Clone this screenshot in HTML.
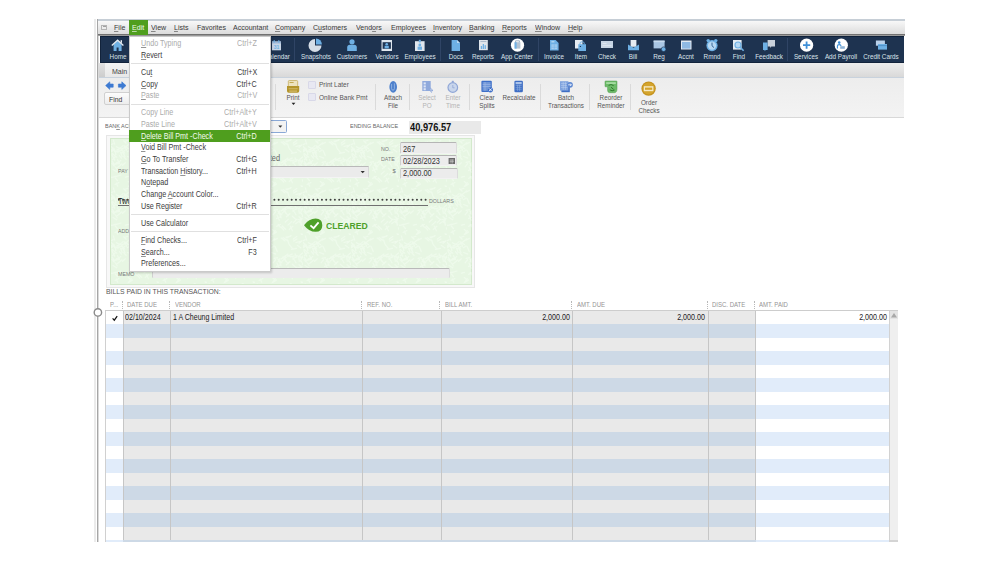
<!DOCTYPE html><html><head><meta charset="utf-8"><style>
html,body{margin:0;padding:0;background:#fff;width:999px;height:562px;overflow:hidden;}
body{position:relative;font-family:"Liberation Sans",sans-serif;}
.t{position:absolute;white-space:nowrap;line-height:1;}
.t u{text-decoration-thickness:0.6px;text-underline-offset:0.6px;text-decoration-color:rgba(60,60,60,0.55);}
.b{position:absolute;box-sizing:border-box;}
svg{position:absolute;overflow:visible;}
</style></head><body>
<div class="b" style="left:94px;top:19px;width:2px;height:523px;background:#ebebeb;"></div>
<div class="b" style="left:97px;top:19px;width:1px;height:523px;background:#a6a6a6;"></div>
<div class="b" style="left:98px;top:36px;width:1px;height:506px;background:#dadada;"></div>
<div class="b" style="left:98px;top:19px;width:807px;height:2px;background:#c6ced6;"></div>
<div class="b" style="left:98px;top:21px;width:807px;height:13px;background:linear-gradient(#f8f8f8,#dcdcdc);"></div>
<div class="b" style="left:98px;top:34px;width:807px;height:1px;background:#727272;"></div>
<div class="b" style="left:98px;top:35px;width:807px;height:1px;background:#9a9a9a;"></div>
<div class="b" style="left:101px;top:24.5px;width:6px;height:5.0px;border:1px solid #b4b4b4;background:#ececec;"></div>
<div class="b" style="left:102.5px;top:26px;width:3.0px;height:0.6px;background:#a0a0a0;"></div>
<div class="b" style="left:129px;top:20px;width:19px;height:15px;background:#4f9e1e;"></div>
<div class="t" style="top:24px;font-size:7.8px;color:#3a3a3a;left:114.20px;transform:scaleX(0.905);transform-origin:0 0;"><u>F</u>ile</div>
<div class="t" style="top:24px;font-size:7.8px;color:#f2faea;left:132.20px;transform:scaleX(0.905);transform-origin:0 0;"><u style='text-decoration-color:rgba(255,255,255,0.6)'>E</u>dit</div>
<div class="t" style="top:24px;font-size:7.8px;color:#3a3a3a;left:151.40px;transform:scaleX(0.905);transform-origin:0 0;"><u>V</u>iew</div>
<div class="t" style="top:24px;font-size:7.8px;color:#3a3a3a;left:173.80px;transform:scaleX(0.905);transform-origin:0 0;"><u>L</u>ists</div>
<div class="t" style="top:24px;font-size:7.8px;color:#3a3a3a;left:197.00px;transform:scaleX(0.905);transform-origin:0 0;">Favorites</div>
<div class="t" style="top:24px;font-size:7.8px;color:#3a3a3a;left:232.70px;transform:scaleX(0.905);transform-origin:0 0;">Accountant</div>
<div class="t" style="top:24px;font-size:7.8px;color:#3a3a3a;left:275.20px;transform:scaleX(0.905);transform-origin:0 0;"><u>C</u>ompany</div>
<div class="t" style="top:24px;font-size:7.8px;color:#3a3a3a;left:313.40px;transform:scaleX(0.905);transform-origin:0 0;">C<u>u</u>stomers</div>
<div class="t" style="top:24px;font-size:7.8px;color:#3a3a3a;left:356.20px;transform:scaleX(0.905);transform-origin:0 0;">Vend<u>o</u>rs</div>
<div class="t" style="top:24px;font-size:7.8px;color:#3a3a3a;left:390.90px;transform:scaleX(0.905);transform-origin:0 0;">Emplo<u>y</u>ees</div>
<div class="t" style="top:24px;font-size:7.8px;color:#3a3a3a;left:433.40px;transform:scaleX(0.905);transform-origin:0 0;"><u>I</u>nventory</div>
<div class="t" style="top:24px;font-size:7.8px;color:#3a3a3a;left:469.00px;transform:scaleX(0.905);transform-origin:0 0;"><u>B</u>anking</div>
<div class="t" style="top:24px;font-size:7.8px;color:#3a3a3a;left:502.00px;transform:scaleX(0.905);transform-origin:0 0;"><u>R</u>eports</div>
<div class="t" style="top:24px;font-size:7.8px;color:#3a3a3a;left:534.50px;transform:scaleX(0.905);transform-origin:0 0;"><u>W</u>indow</div>
<div class="t" style="top:24px;font-size:7.8px;color:#3a3a3a;left:567.70px;transform:scaleX(0.905);transform-origin:0 0;"><u>H</u>elp</div>
<div class="b" style="left:99.5px;top:36px;width:804.5px;height:27px;background:#1e3350;"></div>
<div class="b" style="left:99.5px;top:36px;width:804.5px;height:1px;background:#0f2038;"></div>
<div class="b" style="left:99.5px;top:62px;width:804.5px;height:1px;background:#12233b;"></div>
<div class="b" style="left:99.5px;top:36px;width:1.0px;height:27px;background:#12233b;"></div>
<div class="b" style="left:294.0px;top:38px;width:1.0px;height:23px;background:#2f4465;"></div>
<div class="b" style="left:440.3px;top:38px;width:1.0px;height:23px;background:#2f4465;"></div>
<div class="b" style="left:538.3px;top:38px;width:1.0px;height:23px;background:#2f4465;"></div>
<div class="b" style="left:787.1px;top:38px;width:1.0px;height:23px;background:#2f4465;"></div>
<div class="t" style="top:53px;font-size:7.0px;color:#dde3eb;left:17.60px;width:200px;text-align:center;transform:scaleX(0.9);transform-origin:50% 0;">Home</div>
<div class="t" style="top:53px;font-size:7.0px;color:#dde3eb;left:176.50px;width:200px;text-align:center;transform:scaleX(0.9);transform-origin:50% 0;">Calendar</div>
<div class="t" style="top:53px;font-size:7.0px;color:#dde3eb;left:215.50px;width:200px;text-align:center;transform:scaleX(0.9);transform-origin:50% 0;">Snapshots</div>
<div class="t" style="top:53px;font-size:7.0px;color:#dde3eb;left:252.00px;width:200px;text-align:center;transform:scaleX(0.9);transform-origin:50% 0;">Customers</div>
<div class="t" style="top:53px;font-size:7.0px;color:#dde3eb;left:286.50px;width:200px;text-align:center;transform:scaleX(0.9);transform-origin:50% 0;">Vendors</div>
<div class="t" style="top:53px;font-size:7.0px;color:#dde3eb;left:319.50px;width:200px;text-align:center;transform:scaleX(0.9);transform-origin:50% 0;">Employees</div>
<div class="t" style="top:53px;font-size:7.0px;color:#dde3eb;left:355.60px;width:200px;text-align:center;transform:scaleX(0.9);transform-origin:50% 0;">Docs</div>
<div class="t" style="top:53px;font-size:7.0px;color:#dde3eb;left:383.20px;width:200px;text-align:center;transform:scaleX(0.9);transform-origin:50% 0;">Reports</div>
<div class="t" style="top:53px;font-size:7.0px;color:#dde3eb;left:417.40px;width:200px;text-align:center;transform:scaleX(0.9);transform-origin:50% 0;">App Center</div>
<div class="t" style="top:53px;font-size:7.0px;color:#dde3eb;left:454.00px;width:200px;text-align:center;transform:scaleX(0.9);transform-origin:50% 0;">Invoice</div>
<div class="t" style="top:53px;font-size:7.0px;color:#dde3eb;left:480.50px;width:200px;text-align:center;transform:scaleX(0.9);transform-origin:50% 0;">Item</div>
<div class="t" style="top:53px;font-size:7.0px;color:#dde3eb;left:507.00px;width:200px;text-align:center;transform:scaleX(0.9);transform-origin:50% 0;">Check</div>
<div class="t" style="top:53px;font-size:7.0px;color:#dde3eb;left:533.40px;width:200px;text-align:center;transform:scaleX(0.9);transform-origin:50% 0;">Bill</div>
<div class="t" style="top:53px;font-size:7.0px;color:#dde3eb;left:559.00px;width:200px;text-align:center;transform:scaleX(0.9);transform-origin:50% 0;">Reg</div>
<div class="t" style="top:53px;font-size:7.0px;color:#dde3eb;left:585.60px;width:200px;text-align:center;transform:scaleX(0.9);transform-origin:50% 0;">Accnt</div>
<div class="t" style="top:53px;font-size:7.0px;color:#dde3eb;left:612.00px;width:200px;text-align:center;transform:scaleX(0.9);transform-origin:50% 0;">Rmnd</div>
<div class="t" style="top:53px;font-size:7.0px;color:#dde3eb;left:638.50px;width:200px;text-align:center;transform:scaleX(0.9);transform-origin:50% 0;">Find</div>
<div class="t" style="top:53px;font-size:7.0px;color:#dde3eb;left:668.50px;width:200px;text-align:center;transform:scaleX(0.9);transform-origin:50% 0;">Feedback</div>
<div class="t" style="top:53px;font-size:7.0px;color:#dde3eb;left:706.30px;width:200px;text-align:center;transform:scaleX(0.9);transform-origin:50% 0;">Services</div>
<div class="t" style="top:53px;font-size:7.0px;color:#dde3eb;left:741.30px;width:200px;text-align:center;transform:scaleX(0.9);transform-origin:50% 0;">Add Payroll</div>
<div class="t" style="top:53px;font-size:7.0px;color:#dde3eb;left:781.40px;width:200px;text-align:center;transform:scaleX(0.9);transform-origin:50% 0;">Credit Cards</div>
<svg style="left:110px;top:38px" width="16" height="14" viewBox="110 38 16 14"><path d="M113.6 44.5 V51 H116.6 V47.6 H118.6 V51 H121.6 V44.5 L117.6 40.8Z" fill="#6eb0e4"/><path d="M111.8 45.6 L117.6 40.2 L123.4 45.6" fill="none" stroke="#e8eef5" stroke-width="1.3"/><rect x="120.6" y="40.2" width="1.4" height="2.6" fill="#e8eef5"/></svg>
<svg style="left:271px;top:39px" width="12" height="13" viewBox="271 39 12 13"><rect x="272" y="41.5" width="9" height="8.8" fill="#c8d6e6"/><rect x="272" y="41.5" width="9" height="2" fill="#9fb8d6"/><rect x="273.6" y="40.2" width="1.2" height="2.4" fill="#6eb0e4"/><rect x="278.2" y="40.2" width="1.2" height="2.4" fill="#6eb0e4"/><text x="276.5" y="49.3" font-size="5" font-family="Liberation Sans" font-weight="bold" text-anchor="middle" fill="#6eb0e4">31</text></svg>
<svg style="left:308px;top:38px" width="15" height="15" viewBox="308 38 15 15"><path d="M315 45.5 L315 39 A6.5 6.5 0 1 0 321.5 45.5Z" fill="#d5dde6"/><path d="M316 44.5 L316 38.6 A5.9 5.9 0 0 1 321.9 44.5Z" fill="#6eb0e4"/></svg>
<svg style="left:346px;top:38px" width="12" height="14" viewBox="346 38 12 14"><circle cx="352" cy="41.8" r="2.6" fill="#6eb0e4"/><path d="M347.2 51 V47.6 Q347.2 44.8 350 44.8 H354 Q356.8 44.8 356.8 47.6 V51Z" fill="#6eb0e4"/></svg>
<svg style="left:380px;top:39px" width="14" height="13" viewBox="380 39 14 13"><rect x="381.5" y="40" width="10.5" height="11" fill="#dfe6ee"/><rect x="382.6" y="42.2" width="8.3" height="6.6" fill="#1f3553"/><circle cx="386.7" cy="44.2" r="1.3" fill="#6eb0e4"/><rect x="384.6" y="45.8" width="4.2" height="2.6" fill="#6eb0e4"/></svg>
<svg style="left:414px;top:38px" width="12" height="14" viewBox="414 38 12 14"><rect x="415" y="41.2" width="9.6" height="9.8" fill="#dfe6ee"/><rect x="418.8" y="39.8" width="2" height="2.6" fill="#6eb0e4"/><circle cx="419.8" cy="45" r="1.4" fill="#6eb0e4"/><rect x="417.6" y="46.6" width="4.4" height="3.2" fill="#6eb0e4"/></svg>
<svg style="left:450px;top:39px" width="12" height="13" viewBox="450 39 12 13"><path d="M451.6 40 H457 L460 43 V51 H451.6Z" fill="#6eb0e4"/><path d="M457 40 V43 H460Z" fill="#b9d9f3"/></svg>
<svg style="left:478px;top:39px" width="11" height="12" viewBox="478 39 11 12"><rect x="479" y="40" width="8.8" height="10.2" fill="#dfe5ec"/><rect x="480.4" y="41.2" width="6" height="0.8" fill="#9fb0c4"/><rect x="480.8" y="46" width="1.3" height="3" fill="#6eb0e4"/><rect x="482.7" y="44" width="1.3" height="5" fill="#6eb0e4"/><rect x="484.6" y="45.2" width="1.3" height="3.8" fill="#6eb0e4"/></svg>
<svg style="left:510px;top:38px" width="15" height="15" viewBox="510 38 15 15"><circle cx="517.5" cy="45.2" r="6.6" fill="#ffffff"/><rect x="514.6" y="42.2" width="5.8" height="6.4" fill="#b5c3d2"/><rect x="514.6" y="42.2" width="2" height="6.4" fill="#6eb0e4"/><path d="M515.6 42.2 V40.8 H519.4 V42.2" fill="none" stroke="#8aa0b8" stroke-width="0.8"/></svg>
<svg style="left:549px;top:39px" width="11" height="13" viewBox="549 39 11 13"><path d="M550 40 H555.6 L558.6 43 V50.5 H550Z" fill="#6eb0e4"/><rect x="551.4" y="44.4" width="5.8" height="4.8" fill="#a9d0f0"/><path d="M551.4 46 H557.2 M551.4 47.6 H557.2 M554.3 44.4 V49.2" stroke="#6eb0e4" stroke-width="0.5"/><rect x="551.4" y="41.4" width="3" height="0.9" fill="#d8ebfa"/></svg>
<svg style="left:574px;top:39px" width="13" height="13" viewBox="574 39 13 13"><rect x="575" y="40" width="7.5" height="8.5" fill="#e6ecf2"/><path d="M578.3 44.2 H586 V51 H578.3Z" fill="#6eb0e4"/><path d="M580 44.2 V43 Q580 41.8 582.1 41.8 Q584.2 41.8 584.2 43 V44.2" fill="none" stroke="#6eb0e4" stroke-width="0.9"/><rect x="579.8" y="46" width="1.2" height="1" fill="#1f3553"/></svg>
<svg style="left:600px;top:40px" width="14" height="9" viewBox="600 40 14 9"><rect x="601" y="41" width="12" height="7" fill="#c6d4e4"/><rect x="602.5" y="45.4" width="9" height="0.7" fill="#e9eff6"/><rect x="602.5" y="43" width="4" height="0.7" fill="#e9eff6"/></svg>
<svg style="left:627px;top:39px" width="13" height="12" viewBox="627 39 13 12"><rect x="630.6" y="40" width="5.8" height="6.8" fill="#e6ecf2"/><path d="M628 44.4 L633.5 47.8 L639 44.4 V50.2 H628Z" fill="#6eb0e4"/></svg>
<svg style="left:652px;top:39px" width="15" height="13" viewBox="652 39 15 13"><rect x="653.6" y="40.6" width="11" height="7.8" fill="#a9c6e4"/><rect x="653.6" y="40.6" width="11" height="1.6" fill="#c9dcef"/><circle cx="663.6" cy="49.2" r="2.3" fill="#6eb0e4" stroke="#1c3150" stroke-width="0.6"/></svg>
<svg style="left:680px;top:39px" width="13" height="12" viewBox="680 39 13 12"><rect x="681" y="40.5" width="10.5" height="9" fill="#e2e9f1"/><rect x="682" y="42" width="8.5" height="6.6" fill="#8fb9e3"/></svg>
<svg style="left:705px;top:38px" width="15" height="15" viewBox="705 38 15 15"><circle cx="708.2" cy="40.6" r="1.7" fill="#6eb0e4"/><circle cx="715.8" cy="40.6" r="1.7" fill="#6eb0e4"/><circle cx="712" cy="45.6" r="5.6" fill="#6eb0e4"/><circle cx="712" cy="45.6" r="4.2" fill="#b8d8f2"/><path d="M712 42.6 V45.8 L714 47.6" fill="none" stroke="#2e5b8a" stroke-width="0.9"/></svg>
<svg style="left:732px;top:39px" width="14" height="14" viewBox="732 39 14 14"><rect x="733" y="40" width="8.6" height="9.6" fill="#e6ecf2"/><circle cx="738" cy="45" r="3" fill="#b8d8f2" stroke="#6eb0e4" stroke-width="1.2"/><path d="M740.2 47.2 L743.6 50.8" stroke="#6eb0e4" stroke-width="1.6"/></svg>
<svg style="left:762px;top:39px" width="15" height="13" viewBox="762 39 15 13"><path d="M767.6 40 H775 V46.6 H771.4 L770.2 48 V46.6 H767.6Z" fill="#c9d1db"/><path d="M763 42.4 H767.6 V50 H765.8 L764.6 51.2 V50 H763Z" fill="#6eb0e4"/></svg>
<svg style="left:799px;top:38px" width="15" height="15" viewBox="799 38 15 15"><circle cx="806.6" cy="45.2" r="6.6" fill="#ffffff"/><path d="M806.6 41.6 V48.8 M803 45.2 H810.2" stroke="#3d8fd8" stroke-width="1.8"/></svg>
<svg style="left:834px;top:38px" width="15" height="15" viewBox="834 38 15 15"><circle cx="841.3" cy="45.2" r="6.6" fill="#ffffff"/><circle cx="839.2" cy="42.6" r="1.3" fill="#3d8fd8"/><path d="M837.4 48.4 V46 Q837.4 44.6 839.2 44.6 Q841 44.6 841 46" fill="none" stroke="#3d8fd8" stroke-width="1.1"/><rect x="840.2" y="46.2" width="4.6" height="2.6" fill="#8fb5d8"/></svg>
<svg style="left:875px;top:39px" width="13" height="12" viewBox="875 39 13 12"><rect x="875.9" y="40.5" width="9" height="5.2" fill="#b9d0ea"/><rect x="878" y="44" width="9" height="5.6" fill="#6eb0e4"/><rect x="878" y="45.2" width="9" height="0.9" fill="#4e8ec8"/></svg>
<div class="b" style="left:99px;top:63px;width:805px;height:14px;background:linear-gradient(#ededed,#d9d9d9);"></div>
<div class="b" style="left:99px;top:63px;width:6px;height:14px;background:linear-gradient(#e2e2e2,#cdcdcd);"></div>
<div class="b" style="left:105px;top:63px;width:30px;height:14px;background:linear-gradient(#f4f4f4,#e8e8e8);"></div>
<div class="t" style="top:68px;font-size:7.8px;color:#444;left:111.60px;transform:scaleX(0.9);transform-origin:0 0;">Main</div>
<div class="b" style="left:99px;top:77px;width:805px;height:1px;background:#c8d2dd;"></div>
<div class="b" style="left:99px;top:78px;width:805px;height:39px;background:linear-gradient(#ededed,#f3f3f3);"></div>
<div class="b" style="left:99px;top:117px;width:805px;height:1px;background:#d8d8d8;"></div>
<div class="b" style="left:275.1px;top:84px;width:1.0px;height:26px;background:#dadada;"></div>
<div class="b" style="left:375.0px;top:84px;width:1.0px;height:26px;background:#dadada;"></div>
<div class="b" style="left:409.0px;top:84px;width:1.0px;height:26px;background:#dadada;"></div>
<div class="b" style="left:468.8px;top:84px;width:1.0px;height:26px;background:#dadada;"></div>
<div class="b" style="left:540.1px;top:84px;width:1.0px;height:26px;background:#dadada;"></div>
<div class="b" style="left:589.1px;top:84px;width:1.0px;height:26px;background:#dadada;"></div>
<div class="b" style="left:629.9px;top:84px;width:1.0px;height:26px;background:#dadada;"></div>
<svg style="left:104px;top:81px" width="22" height="9" viewBox="104 81 22 9"><path d="M105.6 85.6 L109.8 81.8 V84 H113.2 V87.2 H109.8 V89.4Z" fill="#3d7ad2" stroke="#3d7ad2" stroke-width="0.6" stroke-linejoin="round"/><path d="M126 85.6 L121.8 81.8 V84 H118.4 V87.2 H121.8 V89.4Z" fill="#3d7ad2" stroke="#3d7ad2" stroke-width="0.6" stroke-linejoin="round"/></svg>
<div class="b" style="left:103.5px;top:92.3px;width:31.5px;height:13.2px;background:linear-gradient(#fcfcfc,#ededed);border:1px solid #d0d0d0;border-radius:2px;"></div>
<div class="t" style="top:96px;font-size:7.4px;color:#333;left:109.00px;transform:scaleX(0.92);transform-origin:0 0;">Find</div>
<div class="t" style="top:94px;font-size:7.2px;color:#555;left:193.20px;width:200px;text-align:center;transform:scaleX(0.88);transform-origin:50% 0;">Print</div>
<div class="t" style="top:94px;font-size:7.2px;color:#555;left:292.80px;width:200px;text-align:center;transform:scaleX(0.88);transform-origin:50% 0;">Attach</div>
<div class="t" style="top:102px;font-size:7.2px;color:#555;left:292.80px;width:200px;text-align:center;transform:scaleX(0.88);transform-origin:50% 0;">File</div>
<div class="t" style="top:94px;font-size:7.2px;color:#b4b4b4;left:326.60px;width:200px;text-align:center;transform:scaleX(0.88);transform-origin:50% 0;">Select</div>
<div class="t" style="top:102px;font-size:7.2px;color:#b4b4b4;left:326.60px;width:200px;text-align:center;transform:scaleX(0.88);transform-origin:50% 0;">PO</div>
<div class="t" style="top:94px;font-size:7.2px;color:#b4b4b4;left:352.70px;width:200px;text-align:center;transform:scaleX(0.88);transform-origin:50% 0;">Enter</div>
<div class="t" style="top:102px;font-size:7.2px;color:#b4b4b4;left:352.70px;width:200px;text-align:center;transform:scaleX(0.88);transform-origin:50% 0;">Time</div>
<div class="t" style="top:94px;font-size:7.2px;color:#555;left:386.60px;width:200px;text-align:center;transform:scaleX(0.88);transform-origin:50% 0;">Clear</div>
<div class="t" style="top:102px;font-size:7.2px;color:#555;left:386.60px;width:200px;text-align:center;transform:scaleX(0.88);transform-origin:50% 0;">Splits</div>
<div class="t" style="top:94px;font-size:7.2px;color:#555;left:418.60px;width:200px;text-align:center;transform:scaleX(0.88);transform-origin:50% 0;">Recalculate</div>
<div class="t" style="top:94px;font-size:7.2px;color:#555;left:465.50px;width:200px;text-align:center;transform:scaleX(0.88);transform-origin:50% 0;">Batch</div>
<div class="t" style="top:102px;font-size:7.2px;color:#555;left:465.50px;width:200px;text-align:center;transform:scaleX(0.88);transform-origin:50% 0;">Transactions</div>
<div class="t" style="top:94px;font-size:7.2px;color:#555;left:511.00px;width:200px;text-align:center;transform:scaleX(0.88);transform-origin:50% 0;">Reorder</div>
<div class="t" style="top:102px;font-size:7.2px;color:#555;left:511.00px;width:200px;text-align:center;transform:scaleX(0.88);transform-origin:50% 0;">Reminder</div>
<div class="t" style="top:99px;font-size:7.2px;color:#555;left:548.50px;width:200px;text-align:center;transform:scaleX(0.88);transform-origin:50% 0;">Order</div>
<div class="t" style="top:106.5px;font-size:7.2px;color:#555;left:548.50px;width:200px;text-align:center;transform:scaleX(0.88);transform-origin:50% 0;">Checks</div>
<div class="b" style="left:307.6px;top:80.8px;width:8.0px;height:7.8px;background:#e8e8f2;border:1px solid #d8d8e8;border-radius:1px;"></div>
<div class="b" style="left:307.6px;top:93.3px;width:8.0px;height:8.0px;background:#e8e8f2;border:1px solid #d8d8e8;border-radius:1px;"></div>
<div class="t" style="top:81px;font-size:7.2px;color:#555;left:318.50px;transform:scaleX(0.9);transform-origin:0 0;">Print Later</div>
<div class="t" style="top:94px;font-size:7.2px;color:#555;left:318.50px;transform:scaleX(0.9);transform-origin:0 0;">Online Bank Pmt</div>
<svg style="left:286px;top:79px" width="15" height="15" viewBox="286 79 15 15"><rect x="288.3" y="80.5" width="9.4" height="6" rx="1" fill="#ede3bf" stroke="#b89a3a" stroke-width="0.6"/><rect x="289.6" y="82.2" width="4" height="0.8" fill="#b89a3a"/><path d="M287 86 H299.2 V91 Q299.2 92.7 297.5 92.7 H288.7 Q287 92.7 287 91Z" fill="#b4952c"/><rect x="288.6" y="88.4" width="9" height="0.8" fill="#d9c27a"/><rect x="289.2" y="90.6" width="7.8" height="1" fill="#d9c27a"/></svg>
<svg style="left:290px;top:102px" width="8" height="4" viewBox="290 102 8 4"><path d="M291.6 102.8 H295.4 L293.5 105Z" fill="#222"/></svg>
<svg style="left:388px;top:80px" width="11" height="14" viewBox="388 80 11 14"><ellipse cx="393.2" cy="86.9" rx="3.8" ry="5.9" fill="#4d80cc"/><path d="M391.6 84 V88.6 Q391.6 90.2 393 90.2 Q394.4 90.2 394.4 88.6 V83.4" fill="none" stroke="#a9c4ea" stroke-width="0.7"/></svg>
<svg style="left:421px;top:80px" width="13" height="14" viewBox="421 80 13 14"><rect x="422.3" y="81" width="8.4" height="10" fill="#8fa9dc"/><rect x="423.6" y="82.4" width="2.2" height="2" fill="#dbe4f5"/><rect x="423.6" y="85.4" width="2.2" height="2" fill="#dbe4f5"/><rect x="423.6" y="88.2" width="2.2" height="2" fill="#dbe4f5"/><path d="M428.2 86 L433 90.6 L430.6 90.8 L431.6 92.6" fill="none" stroke="#8fa9dc" stroke-width="1"/></svg>
<svg style="left:446px;top:80px" width="14" height="14" viewBox="446 80 14 14"><circle cx="452.8" cy="87.5" r="4.8" fill="#c9d6ec" stroke="#8fa6d6" stroke-width="1.2"/><rect x="451.8" y="80.8" width="2" height="1.6" fill="#8fa6d6"/><path d="M452.8 85 V87.8 H454.6" fill="none" stroke="#8fa6d6" stroke-width="0.8"/></svg>
<svg style="left:480px;top:80px" width="14" height="14" viewBox="480 80 14 14"><rect x="481.4" y="80.8" width="10.4" height="11.2" rx="1" fill="#3e6fc8"/><rect x="482.6" y="82" width="8" height="8.8" fill="#6f96d8"/><path d="M482.6 84.4 H490.6 M482.6 86.6 H490.6 M485 82 V90.8" stroke="#a9c1ea" stroke-width="0.6"/><circle cx="490.4" cy="89.8" r="2.6" fill="#3e6fc8"/><path d="M489 88.4 L491.8 91.2 M491.8 88.4 L489 91.2" stroke="#ffffff" stroke-width="0.9"/></svg>
<svg style="left:513px;top:80px" width="11" height="14" viewBox="513 80 11 14"><rect x="514.4" y="80.8" width="8.5" height="11.4" rx="1.2" fill="#3f6ec4"/><rect x="515.6" y="82" width="6.1" height="2.2" fill="#a9c2ea"/><path d="M515.6 85.6 H521.7 M515.6 87.4 H521.7 M515.6 89.2 H521.7 M517.6 84.8 V91 M519.6 84.8 V91" stroke="#8cacdf" stroke-width="0.6"/></svg>
<svg style="left:559px;top:80px" width="15" height="14" viewBox="559 80 15 14"><rect x="561.4" y="82.8" width="8.4" height="9.4" fill="#3f6ec4"/><rect x="560" y="81.2" width="8.4" height="9.4" fill="#7fa3de"/><path d="M561 83.4 H567.4 M561 85.4 H567.4 M561 87.4 H567.4 M563.2 82 V89.8 M565.4 82 V89.8" stroke="#c3d4f0" stroke-width="0.5"/><circle cx="570" cy="84.8" r="2.9" fill="#5d88d2"/><path d="M568.2 84.8 H571.2 M570.2 83.6 L571.4 84.8 L570.2 86" fill="none" stroke="#ffffff" stroke-width="0.8"/></svg>
<svg style="left:604px;top:80px" width="14" height="14" viewBox="604 80 14 14"><path d="M605 81.6 Q605 81 605.6 81 H616.4 Q617 81 617 81.6 V88.6 Q617 92.7 614.6 92.7 H609.6 Q607.6 92.7 607.6 90.6 V86.8 H605.6 Q605 86.8 605 86.2Z" fill="#6cbb68" stroke="#4f9a4c" stroke-width="0.5"/><path d="M606.2 82.2 H615.8 V84 H606.2Z" fill="#a6dca2"/><path d="M608.6 85.4 Q611 83.6 613.6 85.6 M611 87.2 L613.6 89.4 M609.8 89.8 Q612 91.6 614.6 90" fill="none" stroke="#2f7a2e" stroke-width="1"/></svg>
<svg style="left:640px;top:80px" width="17" height="17" viewBox="640 80 17 17"><circle cx="648.6" cy="88.6" r="7.2" fill="#c4921e"/><circle cx="648.6" cy="88.6" r="6" fill="#d4a42c"/><rect x="643.8" y="86.2" width="9.6" height="5" fill="#f6e9c2"/><rect x="645" y="87.6" width="7.2" height="2.2" fill="#d4a42c"/></svg>
<div class="t" style="top:123px;font-size:6.2px;color:#666;left:105.40px;transform:scaleX(0.88);transform-origin:0 0;">BAN<u>K</u> ACCOUNT</div>
<div class="b" style="left:200px;top:120.2px;width:86.6px;height:12.4px;border:1px solid #8aa8d6;background:#f3f3f3;border-radius:1.5px;"></div>
<svg style="left:277px;top:124px" width="7" height="4" viewBox="277 124 7 4"><path d="M278.3 125.6 H282.3 L280.3 127.8Z" fill="#333"/></svg>
<div class="t" style="top:123px;font-size:6.2px;color:#666;left:350.00px;transform:scaleX(0.88);transform-origin:0 0;">ENDING BALANCE</div>
<div class="b" style="left:409px;top:121px;width:72px;height:13px;background:#e9e9e9;"></div>
<div class="t" style="top:122px;font-size:10.6px;color:#111;font-weight:bold;left:410.00px;transform:scaleX(0.875);transform-origin:0 0;">40,976.57</div>
<div class="b" style="left:106px;top:135px;width:369px;height:153px;background:#f8f8f8;border:1px solid #e6e6e6;"></div>
<div class="b" style="left:109.5px;top:138px;width:362.5px;height:147px;background:#e7f6e3;border:1px solid #d3e9cc;"></div>
<svg style="left:110.5px;top:139px" width="360.5" height="145"><defs><pattern id="chk" width="48" height="48" patternUnits="userSpaceOnUse"><path d="M15.5 7.2 L19.8 3.8 M4.5 28.0 L6.2 30.8 M20.1 11.6 L22.3 16.6 M5.9 10.7 L8.9 9.6 M28.1 2.4 L32.6 5.7 M13.9 6.9 L17.6 9.7 M32.7 4.9 L33.9 8.9 M26.3 3.0 L29.8 5.8 M25.5 37.3 L21.7 39.4 M14.4 38.1 L17.5 37.4 M14.4 23.8 L11.5 26.3 M47.0 5.7 L44.1 8.4 M44.8 20.2 L48.5 17.4 M37.9 39.3 L34.3 42.5 M27.8 21.9 L30.7 25.3 M31.9 2.9 L36.0 0.6 M32.7 21.4 L37.2 19.1 M1.1 22.2 L3.6 25.8 M10.5 13.8 L14.0 11.6 M41.8 3.9 L38.7 6.0 M6.6 20.7 L8.6 24.4 M17.2 42.4 L19.9 44.7 M11.1 11.2 L7.8 12.4 M13.5 7.0 L15.6 11.2 M45.7 33.1 L46.2 38.1 M35.5 21.9 L39.6 21.0 M19.2 5.0 L22.4 3.4 M47.3 21.2 L50.0 22.7 M0.0 7.3 L3.1 11.0 M3.4 10.0 L0.6 12.5 M16.7 17.5 L20.8 19.1 M46.9 23.1 L45.4 26.0 M16.4 12.7 L19.0 11.0 M45.6 25.4 L48.7 30.2 M36.4 14.3 L41.4 13.4 M12.5 17.6 L15.1 20.3 M26.0 24.1 L30.6 21.2 M47.3 40.9 L49.7 45.6 M10.9 24.8 L6.3 28.7 M37.9 22.7 L41.0 27.7 M21.5 45.0 L18.0 47.2 M10.6 10.9 L13.7 14.1 M47.3 29.3 L51.4 32.0 M38.4 4.1 L41.8 1.6 M34.2 9.6 L37.4 13.3 M4.2 45.4 L7.9 43.5 M45.4 34.8 L46.6 37.7 M28.4 22.3 L32.8 19.2 M47.1 31.5 L44.7 35.6 M1.0 38.4 L5.4 37.0 M44.8 20.8 L46.5 24.1 M12.1 14.1 L14.0 17.5 M26.1 40.0 L28.8 43.1 M22.0 28.0 L24.3 33.3 M24.1 25.5 L26.1 30.8 M37.3 29.2 L40.6 32.1 M34.8 26.7 L31.4 29.8 M23.2 37.3 L25.3 40.1 M2.0 4.7 L-2.6 7.2 M43.8 21.3 L44.2 26.1 M9.6 13.3 L11.1 17.5 M45.2 33.6 L40.5 36.7 M9.7 21.5 L6.6 24.5 M3.5 11.6 L7.0 13.2 M5.9 37.3 L9.8 36.0 M12.1 6.6 L7.7 10.4 M19.1 23.4 L22.5 22.7 M20.7 24.7 L18.1 27.9 M4.4 17.6 L1.4 20.7 M0.9 15.9 L3.7 21.1 M5.4 44.1 L6.7 47.2 M12.7 1.9 L15.2 4.2 M20.3 43.7 L17.4 47.4 M24.7 23.7 L23.2 26.6 M33.0 20.4 L35.8 21.8 M4.3 12.5 L4.8 15.7 M41.4 21.8 L37.8 24.0 M43.9 29.8 L47.0 32.0 M5.3 7.7 L10.6 10.1 M30.2 25.5 L33.4 28.6 M8.5 16.7 L10.5 19.1 M0.9 24.3 L3.2 27.2 M21.5 31.6 L25.5 29.7 M40.1 18.9 L41.8 22.1 M11.0 9.5 L14.3 8.6 M47.5 47.1 L51.5 49.9 M42.2 20.7 L47.4 22.6 M41.8 32.2 L38.2 35.8 M2.2 8.9 L-0.3 11.8 M46.2 46.7 L47.6 49.4 M42.4 10.5 L45.8 12.8 M22.8 24.1 L26.7 27.8 M4.4 39.2 L6.4 41.5 M1.1 14.6 L5.8 18.2 M41.0 7.5 L45.6 6.4 M36.7 34.6 L32.9 38.1 M30.9 2.1 L35.7 1.3 M35.2 39.0 L37.4 43.8 M27.3 39.0 L30.6 42.4 M42.9 32.8 L46.0 31.8 M2.0 30.6 L5.8 32.8 M2.4 0.9 L3.6 5.2 M0.2 38.3 L5.8 37.5 M4.4 25.2 L8.0 24.3 M3.6 12.7 L7.2 11.8 M31.2 22.1 L27.2 26.2 M13.8 2.2 L16.9 1.2 M7.1 12.2 L11.7 10.8 M6.4 23.2 L2.5 26.3 M33.2 32.4 L30.3 35.0" stroke="#f0fbee" stroke-width="1.2" stroke-opacity="0.8" stroke-linecap="round"/></pattern></defs><rect width="360.5" height="145" fill="url(#chk)"/></svg>
<div class="t" style="top:155px;font-size:8.2px;color:#666;right:719.20px;transform:scaleX(0.9);transform-origin:100% 0;">1 A Cheung Limited</div>
<div class="t" style="top:168px;font-size:6.0px;color:#777;left:118.40px;transform:scaleX(0.88);transform-origin:0 0;">PAY TO THE ORDER OF</div>
<div class="b" style="left:130px;top:166px;width:239px;height:11.6px;background:#ebebeb;border-top:1px solid #b9b9b9;border-left:1px solid #d0d0d0;border-bottom:1px solid #f4f4f4;border-right:1px solid #d8d8d8;border-radius:1px;"></div>
<svg style="left:360px;top:170px" width="7" height="4" viewBox="360 170 7 4"><path d="M360.6 171 H364.8 L362.7 173.3Z" fill="#333"/></svg>
<div class="t" style="top:146px;font-size:6.0px;color:#777;left:380.80px;transform:scaleX(0.88);transform-origin:0 0;">NO.</div>
<div class="t" style="top:156px;font-size:6.0px;color:#777;left:381.00px;transform:scaleX(0.88);transform-origin:0 0;">DATE</div>
<div class="t" style="top:168px;font-size:6.0px;color:#777;left:392.50px;">$</div>
<div class="b" style="left:400.3px;top:142.4px;width:57.1px;height:11.2px;background:#ececec;border-top:1px solid #b5b5b5;border-left:1px solid #cfcfcf;border-right:1px solid #dcdcdc;border-bottom:1px solid #f2f2f2;border-radius:1.5px;"></div>
<div class="b" style="left:400.3px;top:155.4px;width:57.1px;height:10.6px;background:#ececec;border-top:1px solid #b5b5b5;border-left:1px solid #cfcfcf;border-right:1px solid #dcdcdc;border-bottom:1px solid #f2f2f2;border-radius:1.5px;"></div>
<div class="b" style="left:400.3px;top:167.6px;width:57.7px;height:11.4px;background:#ececec;border-top:1px solid #b5b5b5;border-left:1px solid #cfcfcf;border-right:1px solid #dcdcdc;border-bottom:1px solid #f2f2f2;border-radius:1.5px;"></div>
<div class="t" style="top:146px;font-size:8.2px;color:#333;left:402.50px;transform:scaleX(0.9);transform-origin:0 0;">267</div>
<div class="t" style="top:158px;font-size:8.2px;color:#333;left:402.50px;transform:scaleX(0.9);transform-origin:0 0;">02/28/2023</div>
<div class="t" style="top:170px;font-size:8.2px;color:#333;left:402.50px;transform:scaleX(0.9);transform-origin:0 0;">2,000.00</div>
<svg style="left:448px;top:157px" width="8" height="8" viewBox="448 157 8 8"><rect x="448.6" y="158" width="6.4" height="6" fill="#6a6a6a"/><path d="M449.6 160 H454 M449.6 161.6 H454 M451 159.4 V163.6 M452.6 159.4 V163.6" stroke="#d8d8d8" stroke-width="0.5"/></svg>
<div class="t" style="top:198px;font-size:8.2px;color:#222;left:118.20px;transform:scaleX(0.9);transform-origin:0 0;">Two thousand</div>
<svg style="left:110px;top:198px" width="320" height="4" viewBox="110 198 320 4"><path d="M425.6 199.8 H118" stroke="#404040" stroke-width="2" stroke-linecap="round" stroke-dasharray="0 4.32"/></svg>
<div class="b" style="left:118px;top:205.2px;width:309.5px;height:1.2px;background:#707070;"></div>
<div class="t" style="top:198px;font-size:6.0px;color:#777;left:429.00px;transform:scaleX(0.88);transform-origin:0 0;">DOLLARS</div>
<div class="t" style="top:228px;font-size:6.0px;color:#777;left:118.30px;transform:scaleX(0.88);transform-origin:0 0;">ADDRESS</div>
<svg style="left:303px;top:218px" width="21" height="14" viewBox="303 218 21 14"><path d="M304 225.2 Q309 218.6 315.6 218.6 Q322.3 218.6 322.3 225.2 Q322.3 231.8 315.6 231.8 Q309 231.8 304 225.2Z" fill="#4ea02a"/><path d="M310.4 225.4 L313.6 228.2 L318.6 222.4" fill="none" stroke="#fff" stroke-width="1.8"/></svg>
<div class="t" style="top:222px;font-size:9.0px;color:#4ea02a;font-weight:bold;left:326.00px;transform:scaleX(0.96);transform-origin:0 0;">CLEARED</div>
<div class="t" style="top:271px;font-size:6.0px;color:#777;left:118.00px;transform:scaleX(0.88);transform-origin:0 0;">MEMO</div>
<div class="b" style="left:151.7px;top:268.4px;width:297.9px;height:10.0px;background:#ececec;border-top:1px solid #b9b9b9;border-left:1px solid #d0d0d0;border-right:1px solid #dcdcdc;border-radius:1.5px;"></div>
<div class="t" style="top:288px;font-size:7.6px;color:#555;left:105.60px;transform:scaleX(0.9);transform-origin:0 0;">BILLS PAID IN THIS TRANSACTION:</div>
<div class="t" style="top:302px;font-size:6.4px;color:#949494;left:110.00px;transform:scaleX(0.94);transform-origin:0 0;">P...</div>
<div class="t" style="top:302px;font-size:6.4px;color:#949494;left:127.10px;transform:scaleX(0.94);transform-origin:0 0;">DATE DUE</div>
<div class="t" style="top:302px;font-size:6.4px;color:#949494;left:174.75px;transform:scaleX(0.94);transform-origin:0 0;">VENDOR</div>
<div class="t" style="top:302px;font-size:6.4px;color:#949494;left:366.70px;transform:scaleX(0.94);transform-origin:0 0;">REF. NO.</div>
<div class="t" style="top:302px;font-size:6.4px;color:#949494;left:445.00px;transform:scaleX(0.94);transform-origin:0 0;">BILL AMT.</div>
<div class="t" style="top:302px;font-size:6.4px;color:#949494;left:576.60px;transform:scaleX(0.94);transform-origin:0 0;">AMT. DUE</div>
<div class="t" style="top:302px;font-size:6.4px;color:#949494;left:712.00px;transform:scaleX(0.94);transform-origin:0 0;">DISC. DATE</div>
<div class="t" style="top:302px;font-size:6.4px;color:#949494;left:759.40px;transform:scaleX(0.94);transform-origin:0 0;">AMT. PAID</div>
<div class="b" style="left:122.2px;top:301px;width:1.0px;height:8px;border-left:1px dotted #b8b8b8;"></div>
<div class="b" style="left:169.3px;top:301px;width:1.0px;height:8px;border-left:1px dotted #b8b8b8;"></div>
<div class="b" style="left:360.9px;top:301px;width:1.0px;height:8px;border-left:1px dotted #b8b8b8;"></div>
<div class="b" style="left:439.4px;top:301px;width:1.0px;height:8px;border-left:1px dotted #b8b8b8;"></div>
<div class="b" style="left:571.3px;top:301px;width:1.0px;height:8px;border-left:1px dotted #b8b8b8;"></div>
<div class="b" style="left:706.9px;top:301px;width:1.0px;height:8px;border-left:1px dotted #b8b8b8;"></div>
<div class="b" style="left:754.4px;top:301px;width:1.0px;height:8px;border-left:1px dotted #b8b8b8;"></div>
<div class="b" style="left:105px;top:310px;width:793px;height:1px;background:#cdcdcd;"></div>
<div class="b" style="left:106px;top:311.00px;width:17px;height:13.47px;background:#ffffff"></div>
<div class="b" style="left:123px;top:311.00px;width:633px;height:13.47px;background:#e9e9e9"></div>
<div class="b" style="left:756px;top:311.00px;width:133px;height:13.47px;background:#ffffff"></div>
<div class="b" style="left:106px;top:324.47px;width:17px;height:13.47px;background:#e1ecfa"></div>
<div class="b" style="left:123px;top:324.47px;width:633px;height:13.47px;background:#cdd9e6"></div>
<div class="b" style="left:756px;top:324.47px;width:133px;height:13.47px;background:#e1ecfa"></div>
<div class="b" style="left:106px;top:337.94px;width:17px;height:13.47px;background:#ffffff"></div>
<div class="b" style="left:123px;top:337.94px;width:633px;height:13.47px;background:#e9e9e9"></div>
<div class="b" style="left:756px;top:337.94px;width:133px;height:13.47px;background:#ffffff"></div>
<div class="b" style="left:106px;top:351.41px;width:17px;height:13.47px;background:#e1ecfa"></div>
<div class="b" style="left:123px;top:351.41px;width:633px;height:13.47px;background:#cdd9e6"></div>
<div class="b" style="left:756px;top:351.41px;width:133px;height:13.47px;background:#e1ecfa"></div>
<div class="b" style="left:106px;top:364.88px;width:17px;height:13.47px;background:#ffffff"></div>
<div class="b" style="left:123px;top:364.88px;width:633px;height:13.47px;background:#e9e9e9"></div>
<div class="b" style="left:756px;top:364.88px;width:133px;height:13.47px;background:#ffffff"></div>
<div class="b" style="left:106px;top:378.35px;width:17px;height:13.47px;background:#e1ecfa"></div>
<div class="b" style="left:123px;top:378.35px;width:633px;height:13.47px;background:#cdd9e6"></div>
<div class="b" style="left:756px;top:378.35px;width:133px;height:13.47px;background:#e1ecfa"></div>
<div class="b" style="left:106px;top:391.82px;width:17px;height:13.47px;background:#ffffff"></div>
<div class="b" style="left:123px;top:391.82px;width:633px;height:13.47px;background:#e9e9e9"></div>
<div class="b" style="left:756px;top:391.82px;width:133px;height:13.47px;background:#ffffff"></div>
<div class="b" style="left:106px;top:405.29px;width:17px;height:13.47px;background:#e1ecfa"></div>
<div class="b" style="left:123px;top:405.29px;width:633px;height:13.47px;background:#cdd9e6"></div>
<div class="b" style="left:756px;top:405.29px;width:133px;height:13.47px;background:#e1ecfa"></div>
<div class="b" style="left:106px;top:418.76px;width:17px;height:13.47px;background:#ffffff"></div>
<div class="b" style="left:123px;top:418.76px;width:633px;height:13.47px;background:#e9e9e9"></div>
<div class="b" style="left:756px;top:418.76px;width:133px;height:13.47px;background:#ffffff"></div>
<div class="b" style="left:106px;top:432.23px;width:17px;height:13.47px;background:#e1ecfa"></div>
<div class="b" style="left:123px;top:432.23px;width:633px;height:13.47px;background:#cdd9e6"></div>
<div class="b" style="left:756px;top:432.23px;width:133px;height:13.47px;background:#e1ecfa"></div>
<div class="b" style="left:106px;top:445.70px;width:17px;height:13.47px;background:#ffffff"></div>
<div class="b" style="left:123px;top:445.70px;width:633px;height:13.47px;background:#e9e9e9"></div>
<div class="b" style="left:756px;top:445.70px;width:133px;height:13.47px;background:#ffffff"></div>
<div class="b" style="left:106px;top:459.17px;width:17px;height:13.47px;background:#e1ecfa"></div>
<div class="b" style="left:123px;top:459.17px;width:633px;height:13.47px;background:#cdd9e6"></div>
<div class="b" style="left:756px;top:459.17px;width:133px;height:13.47px;background:#e1ecfa"></div>
<div class="b" style="left:106px;top:472.64px;width:17px;height:13.47px;background:#ffffff"></div>
<div class="b" style="left:123px;top:472.64px;width:633px;height:13.47px;background:#e9e9e9"></div>
<div class="b" style="left:756px;top:472.64px;width:133px;height:13.47px;background:#ffffff"></div>
<div class="b" style="left:106px;top:486.11px;width:17px;height:13.47px;background:#e1ecfa"></div>
<div class="b" style="left:123px;top:486.11px;width:633px;height:13.47px;background:#cdd9e6"></div>
<div class="b" style="left:756px;top:486.11px;width:133px;height:13.47px;background:#e1ecfa"></div>
<div class="b" style="left:106px;top:499.58px;width:17px;height:13.47px;background:#ffffff"></div>
<div class="b" style="left:123px;top:499.58px;width:633px;height:13.47px;background:#e9e9e9"></div>
<div class="b" style="left:756px;top:499.58px;width:133px;height:13.47px;background:#ffffff"></div>
<div class="b" style="left:106px;top:513.05px;width:17px;height:13.47px;background:#e1ecfa"></div>
<div class="b" style="left:123px;top:513.05px;width:633px;height:13.47px;background:#cdd9e6"></div>
<div class="b" style="left:756px;top:513.05px;width:133px;height:13.47px;background:#e1ecfa"></div>
<div class="b" style="left:106px;top:526.52px;width:17px;height:13.47px;background:#ffffff"></div>
<div class="b" style="left:123px;top:526.52px;width:633px;height:13.47px;background:#e9e9e9"></div>
<div class="b" style="left:756px;top:526.52px;width:133px;height:13.47px;background:#ffffff"></div>
<div class="b" style="left:106px;top:540px;width:17px;height:2px;background:#e1ecfa;"></div>
<div class="b" style="left:123px;top:540px;width:633px;height:2px;background:#cdd9e6;"></div>
<div class="b" style="left:756px;top:540px;width:133px;height:2px;background:#e1ecfa;"></div>
<div class="b" style="left:105px;top:311px;width:1px;height:231px;background:#d0d0d0;"></div>
<div class="b" style="left:123px;top:311px;width:1px;height:229px;background:#c6c6c6;"></div>
<div class="b" style="left:170px;top:311px;width:1px;height:229px;background:#c6c6c6;"></div>
<div class="b" style="left:362px;top:311px;width:1px;height:229px;background:#c6c6c6;"></div>
<div class="b" style="left:441px;top:311px;width:1px;height:229px;background:#c6c6c6;"></div>
<div class="b" style="left:572px;top:311px;width:1px;height:229px;background:#c6c6c6;"></div>
<div class="b" style="left:708px;top:311px;width:1px;height:229px;background:#c6c6c6;"></div>
<div class="b" style="left:755px;top:311px;width:1px;height:229px;background:#c6c6c6;"></div>
<div class="b" style="left:889px;top:311px;width:9px;height:231px;background:#efefef;border-left:1px solid #d2d2d2;"></div>
<div class="b" style="left:890px;top:311px;width:8px;height:8px;background:#e4e4e4;"></div>
<svg style="left:890px;top:311px" width="8" height="8" viewBox="890 311 8 8"><path d="M891 317.5 L894 313 L897 317.5Z" fill="#a8a8a8"/></svg>
<div class="b" style="left:890px;top:540px;width:8px;height:2px;background:#d4d4d4;"></div>
<svg style="left:92px;top:307px" width="12" height="12" viewBox="92 307 12 12"><circle cx="97.9" cy="312.4" r="3.7" fill="#fff" stroke="#8a8a8a" stroke-width="1.4"/></svg>
<svg style="left:111px;top:314px" width="8" height="8" viewBox="111 314 8 8"><path d="M112.6 318.4 L114.3 320.2 L117.2 316.2" fill="none" stroke="#111" stroke-width="1.2"/></svg>
<div class="t" style="top:314px;font-size:8.2px;color:#1a1a1a;left:124.70px;transform:scaleX(0.87);transform-origin:0 0;">02/10/2024</div>
<div class="t" style="top:314px;font-size:8.2px;color:#1a1a1a;left:172.90px;transform:scaleX(0.86);transform-origin:0 0;">1 A Cheung Limited</div>
<div class="t" style="top:314px;font-size:8.2px;color:#1a1a1a;right:429.20px;transform:scaleX(0.87);transform-origin:100% 0;">2,000.00</div>
<div class="t" style="top:314px;font-size:8.2px;color:#1a1a1a;right:294.00px;transform:scaleX(0.87);transform-origin:100% 0;">2,000.00</div>
<div class="t" style="top:314px;font-size:8.2px;color:#1a1a1a;right:112.60px;transform:scaleX(0.87);transform-origin:100% 0;">2,000.00</div>
<div class="b" style="left:128.5px;top:36px;width:142.0px;height:235.6px;background:#fff;border:1px solid #cacaca;box-shadow:1px 1px 2px rgba(0,0,0,0.18);"></div>
<div class="t" style="top:39px;font-size:8.3px;color:#ababab;left:140.50px;transform:scaleX(0.865);transform-origin:0 0;"><u>U</u>ndo Typing</div>
<div class="t" style="top:39px;font-size:8.3px;color:#ababab;right:742.00px;transform:scaleX(0.865);transform-origin:100% 0;">Ctrl+Z</div>
<div class="t" style="top:51px;font-size:8.3px;color:#3c3c3c;left:140.50px;transform:scaleX(0.865);transform-origin:0 0;"><u>R</u>evert</div>
<div class="b" style="left:131px;top:63px;width:138px;height:1px;background:#e0e0e0;"></div>
<div class="t" style="top:68px;font-size:8.3px;color:#3c3c3c;left:140.50px;transform:scaleX(0.865);transform-origin:0 0;">Cu<u>t</u></div>
<div class="t" style="top:68px;font-size:8.3px;color:#3c3c3c;right:742.00px;transform:scaleX(0.865);transform-origin:100% 0;">Ctrl+X</div>
<div class="t" style="top:80px;font-size:8.3px;color:#3c3c3c;left:140.50px;transform:scaleX(0.865);transform-origin:0 0;"><u>C</u>opy</div>
<div class="t" style="top:80px;font-size:8.3px;color:#3c3c3c;right:742.00px;transform:scaleX(0.865);transform-origin:100% 0;">Ctrl+C</div>
<div class="t" style="top:91px;font-size:8.3px;color:#ababab;left:140.50px;transform:scaleX(0.865);transform-origin:0 0;"><u>P</u>aste</div>
<div class="t" style="top:91px;font-size:8.3px;color:#ababab;right:742.00px;transform:scaleX(0.865);transform-origin:100% 0;">Ctrl+V</div>
<div class="b" style="left:131px;top:104px;width:138px;height:1px;background:#e0e0e0;"></div>
<div class="t" style="top:108px;font-size:8.3px;color:#ababab;left:140.50px;transform:scaleX(0.865);transform-origin:0 0;">Copy Line</div>
<div class="t" style="top:108px;font-size:8.3px;color:#ababab;right:742.00px;transform:scaleX(0.865);transform-origin:100% 0;">Ctrl+Alt+Y</div>
<div class="t" style="top:120px;font-size:8.3px;color:#ababab;left:140.50px;transform:scaleX(0.865);transform-origin:0 0;">Paste Line</div>
<div class="t" style="top:120px;font-size:8.3px;color:#ababab;right:742.00px;transform:scaleX(0.865);transform-origin:100% 0;">Ctrl+Alt+V</div>
<div class="b" style="left:129px;top:130px;width:141px;height:11.6px;background:#4f9e1e;"></div>
<div class="t" style="top:132px;font-size:8.3px;color:#f4fbef;left:140.50px;transform:scaleX(0.865);transform-origin:0 0;"><u style='text-decoration-color:rgba(255,255,255,0.6)'>D</u>elete Bill Pmt -Check</div>
<div class="t" style="top:132px;font-size:8.3px;color:#f4fbef;right:742.00px;transform:scaleX(0.865);transform-origin:100% 0;">Ctrl+D</div>
<div class="t" style="top:143px;font-size:8.3px;color:#3c3c3c;left:140.50px;transform:scaleX(0.865);transform-origin:0 0;"><u>V</u>oid Bill Pmt -Check</div>
<div class="t" style="top:155px;font-size:8.3px;color:#3c3c3c;left:140.50px;transform:scaleX(0.865);transform-origin:0 0;"><u>G</u>o To Transfer</div>
<div class="t" style="top:155px;font-size:8.3px;color:#3c3c3c;right:742.00px;transform:scaleX(0.865);transform-origin:100% 0;">Ctrl+G</div>
<div class="t" style="top:167px;font-size:8.3px;color:#3c3c3c;left:140.50px;transform:scaleX(0.865);transform-origin:0 0;">Transaction <u>H</u>istory...</div>
<div class="t" style="top:167px;font-size:8.3px;color:#3c3c3c;right:742.00px;transform:scaleX(0.865);transform-origin:100% 0;">Ctrl+H</div>
<div class="t" style="top:178px;font-size:8.3px;color:#3c3c3c;left:140.50px;transform:scaleX(0.865);transform-origin:0 0;">N<u>o</u>tepad</div>
<div class="t" style="top:190px;font-size:8.3px;color:#3c3c3c;left:140.50px;transform:scaleX(0.865);transform-origin:0 0;">Change <u>A</u>ccount Color...</div>
<div class="t" style="top:202px;font-size:8.3px;color:#3c3c3c;left:140.50px;transform:scaleX(0.865);transform-origin:0 0;">Use Register</div>
<div class="t" style="top:202px;font-size:8.3px;color:#3c3c3c;right:742.00px;transform:scaleX(0.865);transform-origin:100% 0;">Ctrl+R</div>
<div class="b" style="left:131px;top:214px;width:138px;height:1px;background:#e0e0e0;"></div>
<div class="t" style="top:219px;font-size:8.3px;color:#3c3c3c;left:140.50px;transform:scaleX(0.865);transform-origin:0 0;">Use Calculator</div>
<div class="b" style="left:131px;top:231px;width:138px;height:1px;background:#e0e0e0;"></div>
<div class="t" style="top:236px;font-size:8.3px;color:#3c3c3c;left:140.50px;transform:scaleX(0.865);transform-origin:0 0;"><u>F</u>ind Checks...</div>
<div class="t" style="top:236px;font-size:8.3px;color:#3c3c3c;right:742.00px;transform:scaleX(0.865);transform-origin:100% 0;">Ctrl+F</div>
<div class="t" style="top:248px;font-size:8.3px;color:#3c3c3c;left:140.50px;transform:scaleX(0.865);transform-origin:0 0;"><u>S</u>earch...</div>
<div class="t" style="top:248px;font-size:8.3px;color:#3c3c3c;right:742.00px;transform:scaleX(0.865);transform-origin:100% 0;">F3</div>
<div class="t" style="top:259px;font-size:8.3px;color:#3c3c3c;left:140.50px;transform:scaleX(0.865);transform-origin:0 0;">Preferences...</div>
</body></html>
